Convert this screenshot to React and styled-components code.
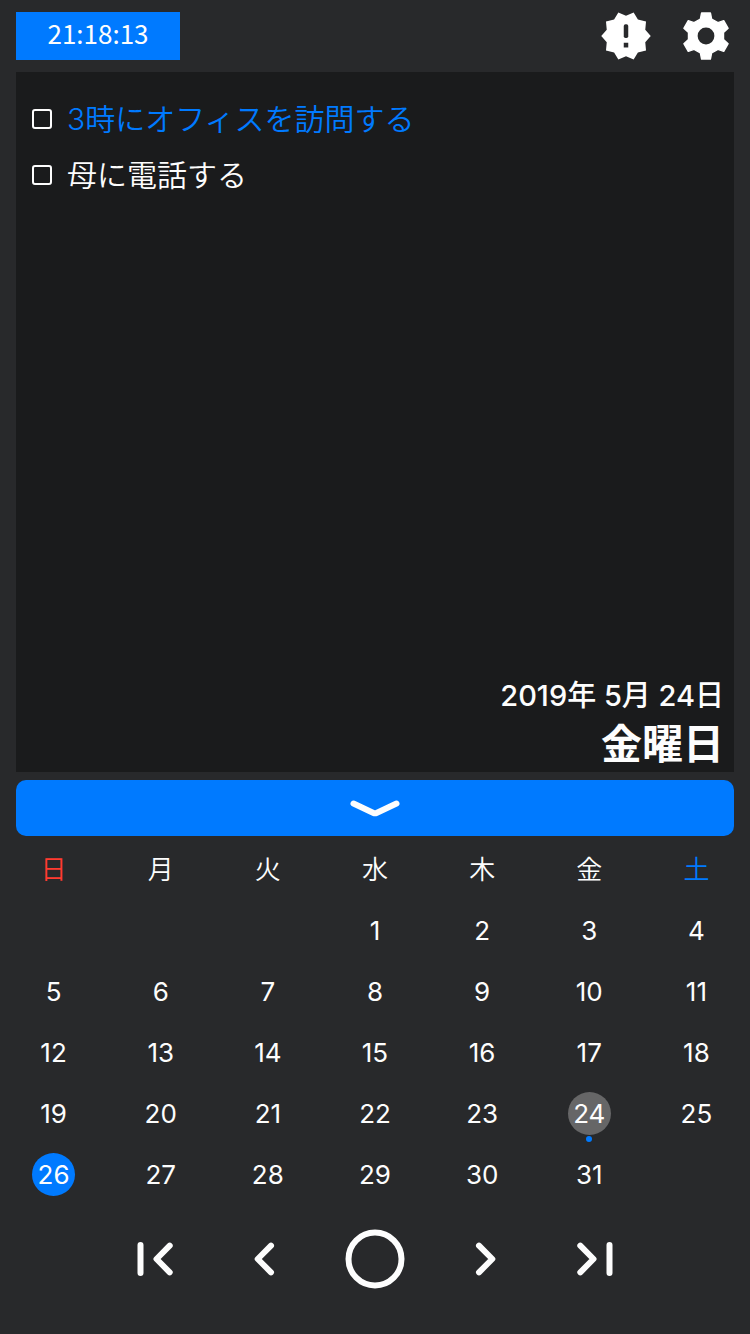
import React, { useState } from "react";
import styled, { createGlobalStyle } from "styled-components";

const BLUE = "#007aff";
const WHITE = "#fdfdfd";
const BASE = "#28292b";

const GlobalStyle = createGlobalStyle`
  * { box-sizing: border-box; }
  body {
    margin: 0;
    background: ${BASE};
    color: ${WHITE};
    font-family: Inter, "Noto Sans CJK JP", sans-serif;
  }
  button {
    margin: 0;
    padding: 0;
    border: 0;
    background: none;
    color: inherit;
    font: inherit;
    cursor: pointer;
  }
`;

const Page = styled.div`
  display: flex;
  flex-direction: column;
  min-height: 100vh;
`;

const Header = styled.header`
  display: flex;
  align-items: center;
  justify-content: space-between;
  padding: 12px 16px;
`;

const Clock = styled.time`
  width: 164px;
  height: 48px;
  background: ${BLUE};
  font-family: "Noto Sans CJK JP", sans-serif;
  font-size: 26px;
  line-height: 42px;
  text-align: center;
`;

const HeaderActions = styled.div`
  display: flex;
  gap: 24px;
`;

const IconButton = styled.button`
  display: flex;
  align-items: center;
  justify-content: center;
  width: 56px;
  height: 48px;
`;

const Notes = styled.main`
  display: flex;
  flex: 1;
  flex-direction: column;
  justify-content: space-between;
  margin: 0 16px 8px;
  padding: 19px 10px 0 16px;
  background: #1a1b1c;
`;

const TaskList = styled.ul`
  margin: 0;
  padding: 0;
  list-style: none;
`;

const Task = styled.li`
  display: flex;
  align-items: center;
  gap: 15px;
  height: 56px;
  color: ${({ $accent }) => ($accent ? BLUE : WHITE)};
  font-size: 30px;
  font-weight: 350;
  line-height: 56px;
`;

const TaskBox = styled.input`
  appearance: none;
  width: 20px;
  height: 20px;
  margin: 0;
  border: 2px solid ${WHITE};
  border-radius: 3px;
  &:checked { background: ${BLUE}; }
`;

const SelectedDate = styled.div`
  text-align: right;
`;

const DateLine = styled.div`
  font-size: 29px;
  font-weight: 500;
  line-height: 40px;
`;

const WeekdayLine = styled.div`
  font-size: 41px;
  font-weight: 700;
  line-height: 56px;
`;

const CollapseButton = styled.button`
  display: flex;
  align-items: center;
  justify-content: center;
  height: 56px;
  margin: 0 16px;
  border-radius: 10px;
  background: ${BLUE};
`;

const Calendar = styled.table`
  width: 100%;
  margin-top: 3px;
  border-collapse: collapse;
  table-layout: fixed;
  text-align: center;
  font-size: 26px;
`;

const CalendarRow = styled.tr`
  height: 61px;
`;

const Weekday = styled.th`
  padding: 0;
  color: ${({ $color }) => $color || WHITE};
  font-weight: 350;
  line-height: 32px;
`;

const DayCell = styled.td`
  padding: 0;
`;

const Day = styled.button`
  position: relative;
  display: block;
  width: 43px;
  height: 43px;
  margin: 0 auto;
  border-radius: 50%;
  background: ${({ $fill }) => $fill || "transparent"};
  line-height: 43px;
`;

const EventDot = styled.span`
  position: absolute;
  top: 44px;
  left: 50%;
  width: 6px;
  height: 6px;
  margin-left: -3px;
  border-radius: 50%;
  background: ${BLUE};
`;

const Pager = styled.nav`
  display: flex;
  justify-content: center;
  padding: 23px 0 44px;
`;

const PagerButton = styled.button`
  display: flex;
  align-items: center;
  justify-content: center;
  width: 110px;
  height: 62px;
`;

const StrokeIcon = styled.svg`
  fill: none;
  stroke: ${WHITE};
  stroke-width: 6;
  stroke-linecap: round;
  stroke-linejoin: round;
`;

const AlertIcon = () => (
  <svg width="54" height="54" viewBox="0 0 24 24" fill="#fff" aria-hidden="true">
    <path d="M23 12l-2.44-2.78.34-3.68-3.61-.82-1.89-3.18L12 3 8.6 1.54 6.71 4.72l-3.61.81.34 3.68L1 12l2.44 2.78-.34 3.69 3.61.82 1.89 3.18L12 21l3.4 1.46 1.89-3.18 3.61-.82-.34-3.68L23 12z" />
    <rect x="11" y="6.8" width="2" height="6.1" rx=".8" fill={BASE} />
    <rect x="11" y="15" width="2" height="2.1" fill={BASE} />
  </svg>
);

// One tapered tooth, repeated every 60 degrees around the hub.
const TOOTH = [[-5.6, -17], [-4.4, -23], [4.4, -23], [5.6, -17]];
const GEAR_POINTS = [0, 1, 2, 3, 4, 5]
  .flatMap((turn) => {
    const cos = Math.cos((turn * Math.PI) / 3);
    const sin = Math.sin((turn * Math.PI) / 3);
    return TOOTH.map(([x, y]) => `${x * cos - y * sin},${x * sin + y * cos}`);
  })
  .join(" ");

const GearIcon = () => (
  <svg width="50" height="50" viewBox="-25 -25 50 50" aria-hidden="true">
    <polygon points={GEAR_POINTS} fill="#fff" stroke="#fff" strokeWidth="1.4" strokeLinejoin="round" />
    <circle r="8.4" fill={BASE} />
  </svg>
);

const TASKS = [
  { id: "office", text: "3時にオフィスを訪問する", accent: true },
  { id: "mother", text: "母に電話する", accent: false },
];

const WEEKDAYS = [
  { name: "日", color: "#ff3b30" },
  { name: "月" },
  { name: "火" },
  { name: "水" },
  { name: "木" },
  { name: "金" },
  { name: "土", color: BLUE },
];

const FIRST_WEEKDAY = 3;
const WEEKS = Array.from({ length: 5 }, (_, week) =>
  Array.from({ length: 7 }, (_, i) => {
    const day = week * 7 + i - FIRST_WEEKDAY + 1;
    return day >= 1 && day <= 31 ? day : null;
  })
);
const FILLS = { 24: "#666667", 26: BLUE };

const PAGER = [
  { label: "前年", width: 38, d: "M4.5 4V32M33.7 4.7L20.5 18L33.7 31.3" },
  { label: "前月", width: 22, d: "M17 4.7L3.7 18L17 31.3" },
  { label: "今日", width: 62 },
  { label: "翌月", width: 22, d: "M5 4.7L18.3 18L5 31.3" },
  { label: "翌年", width: 38, d: "M4.3 4.7L17.5 18L4.3 31.3M33.5 4V32" },
];

export default function App() {
  const [done, setDone] = useState({});
  return (
    <Page>
      <GlobalStyle />
      <Header>
        <Clock>21:18:13</Clock>
        <HeaderActions>
          <IconButton aria-label="お知らせ"><AlertIcon /></IconButton>
          <IconButton aria-label="設定"><GearIcon /></IconButton>
        </HeaderActions>
      </Header>
      <Notes>
        <TaskList>
          {TASKS.map(({ id, text, accent }) => (
            <Task key={id} $accent={accent}>
              <TaskBox
                id={id}
                type="checkbox"
                checked={!!done[id]}
                onChange={(e) => setDone({ ...done, [id]: e.target.checked })}
              />
              <label htmlFor={id}>{text}</label>
            </Task>
          ))}
        </TaskList>
        <SelectedDate>
          <DateLine>2019年 5月 24日</DateLine>
          <WeekdayLine>金曜日</WeekdayLine>
        </SelectedDate>
      </Notes>
      <CollapseButton aria-label="カレンダーを閉じる">
        <StrokeIcon width="52" height="20" viewBox="0 0 52 20">
          <path d="M4.5 5.5L24.5 15Q26 15.7 27.5 15L47.5 5.5" />
        </StrokeIcon>
      </CollapseButton>
      <Calendar>
        <thead>
          <CalendarRow>
            {WEEKDAYS.map(({ name, color }) => (
              <Weekday key={name} $color={color}>{name}</Weekday>
            ))}
          </CalendarRow>
        </thead>
        <tbody>
          {WEEKS.map((week, row) => (
            <CalendarRow key={row}>
              {week.map((day, i) => (
                <DayCell key={i}>
                  {day && (
                    <Day $fill={FILLS[day]}>
                      {day}
                      {day === 24 && <EventDot />}
                    </Day>
                  )}
                </DayCell>
              ))}
            </CalendarRow>
          ))}
        </tbody>
      </Calendar>
      <Pager>
        {PAGER.map(({ label, width, d }) => (
          <PagerButton key={label} aria-label={label}>
            {d ? (
              <StrokeIcon width={width} height="36" viewBox={`0 0 ${width} 36`}>
                <path d={d} />
              </StrokeIcon>
            ) : (
              <StrokeIcon width={width} height="62" viewBox="0 0 62 62">
                <circle cx="31" cy="31" r="26.5" />
              </StrokeIcon>
            )}
          </PagerButton>
        ))}
      </Pager>
    </Page>
  );
}
